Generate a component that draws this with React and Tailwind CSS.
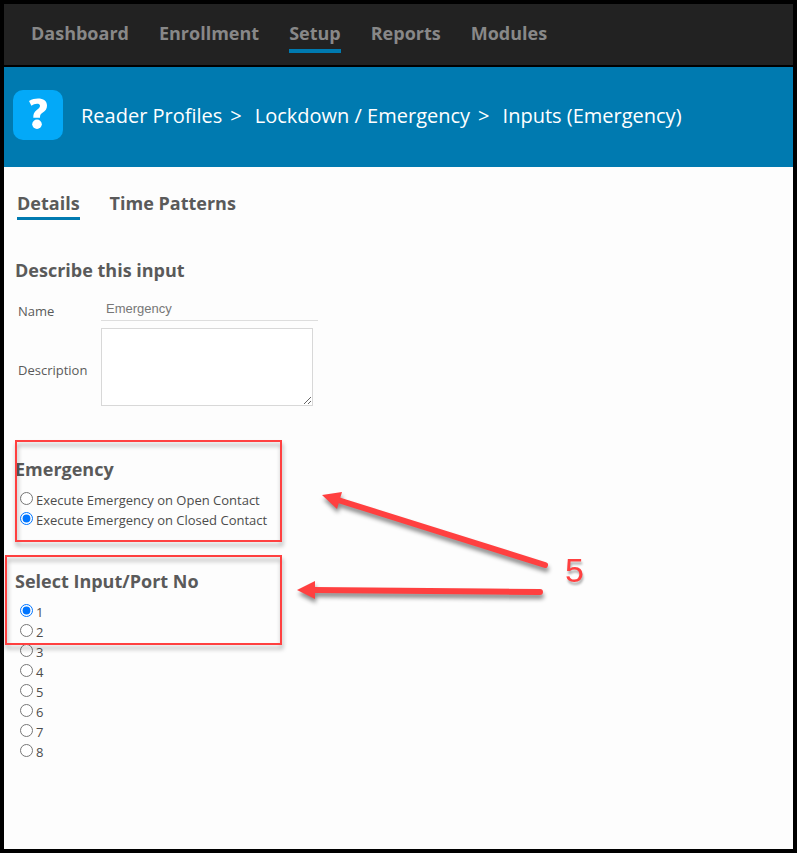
import { useState } from "react";

const navItems = ["Dashboard", "Enrollment", "Setup", "Reports", "Modules"];
const tabs = ["Details", "Time Patterns"];
const crumbs = ["Reader Profiles", "Lockdown / Emergency", "Inputs (Emergency)"];
const contacts = [
    { value: "open", label: "Execute Emergency on Open Contact" },
    { value: "closed", label: "Execute Emergency on Closed Contact" },
];
const ports = ["1", "2", "3", "4", "5", "6", "7", "8"];

function RadioList({ name, options, value, onChange }) {
    return (
        <div className="pl-[5px]">
            {options.map((option) => (
                <label
                    key={option.value}
                    className="flex items-start gap-[3px] h-5 text-[13px] leading-5 text-[#4c4c4c]"
                >
                    <input
                        type="radio"
                        name={name}
                        value={option.value}
                        checked={value === option.value}
                        onChange={() => onChange(option.value)}
                        className="w-[13px] h-[13px] mt-0.5"
                    />
                    {option.label}
                </label>
            ))}
        </div>
    );
}

function Annotations() {
    return (
        <div className="absolute inset-0 pointer-events-none">
            <div className="absolute left-[11px] top-[436px] w-[267px] h-[102px] border-2 border-[#ff4040] drop-shadow-[1px_4px_2px_rgba(0,0,0,0.35)]" />
            <div className="absolute left-px top-[551px] w-[277px] h-[90px] border-2 border-[#ff4040] drop-shadow-[1px_4px_2px_rgba(0,0,0,0.35)]" />
            <svg
                width="260"
                height="120"
                viewBox="294 486 260 120"
                className="absolute left-[290px] top-[482px] drop-shadow-[1px_4px_2px_rgba(0,0,0,0.45)]"
                fill="#ff4040"
                stroke="#ff4040"
                strokeLinecap="round"
            >
                <path d="M338 500 L545 565" strokeWidth="6" />
                <path d="M322 495 L342 492 L337 509 Z" stroke="none" />
                <path d="M313 590 L540 592" strokeWidth="6" />
                <path d="M297 590 L315 581 L315 599 Z" stroke="none" />
            </svg>
            <span className="absolute left-[561px] top-[548px] font-['Liberation_Sans',sans-serif] text-[34px] leading-9 text-[#ff4040] drop-shadow-[1px_3px_1px_rgba(0,0,0,0.3)]">
                5
            </span>
        </div>
    );
}

function App() {
    const [contact, setContact] = useState("closed");
    const [port, setPort] = useState("1");
    const [name, setName] = useState("Emergency");

    return (
        <div className="relative min-h-screen border-4 border-black bg-[#fdfdfd] font-['Open_Sans','Noto_Sans',sans-serif]">
            <nav className="flex gap-[30px] h-[63px] px-[27px] pt-[17px] bg-[#222222] border-b-2 border-black">
                {navItems.map((item) => (
                    <a
                        key={item}
                        href="#"
                        className={`h-8 text-lg leading-6 font-bold text-[#888888] ${
                            item === "Setup" ? "border-b-4 border-[#007ab0]" : ""
                        }`}
                    >
                        {item}
                    </a>
                ))}
            </nav>

            <header className="flex items-center h-[100px] pl-[9px] pb-1 bg-[#007ab0]">
                <div className="flex items-start justify-center w-[50px] h-[50px] pt-2 rounded-[10px] bg-[#03a9f8]">
                    <svg width="20" height="32" viewBox="0 0 20 32" fill="#ffffff">
                        <path d="M1 3 C4 1.2 7 .5 10 .5 C15.5 .5 19 3 19 7.5 C19 11 17.5 12.7 14.5 14.8 C12.4 16.3 12 17.2 12 19.8 H5.3 C5.2 16.2 6 14 9 11.8 C11 10.2 12 9.3 12 7.8 C12 6.3 10.8 5.7 9 5.7 C7 5.7 5 6.4 3.4 7.8 Z" />
                        <ellipse cx="9" cy="26.3" rx="4.8" ry="4.7" />
                    </svg>
                </div>
                <div className="flex pt-0.5 pl-[18px] text-xl text-white">
                    {crumbs.map((crumb, index) => (
                        <span key={crumb} className="flex">
                            <a href="#">{crumb}</a>
                            {index < crumbs.length - 1 && <span className="pl-2 pr-[13px]">&gt;</span>}
                        </span>
                    ))}
                </div>
            </header>

            <main className="px-[11px] pt-6 text-[#5a5a5a]">
                <div className="flex gap-[30px] pl-0.5">
                    {tabs.map((tab) => (
                        <a
                            key={tab}
                            href="#"
                            className={`h-[29px] text-lg leading-6 font-bold ${
                                tab === "Details" ? "border-b-[3px] border-[#007ab0]" : ""
                            }`}
                        >
                            {tab}
                        </a>
                    ))}
                </div>

                <h2 className="mt-[38px] text-lg leading-6 font-bold">Describe this input</h2>
                <div className="grid grid-cols-[83px_1fr] items-center gap-y-1.5 pt-[15px] pl-[3px] text-[13px]">
                    <label htmlFor="name" className="pt-[5px]">
                        Name
                    </label>
                    <input
                        id="name"
                        value={name}
                        onChange={(e) => setName(e.target.value)}
                        className="w-[217px] h-[23px] px-[5px] border-b border-[#dddddd] font-['Liberation_Sans',sans-serif] text-[13px] text-[#777777] outline-none"
                    />
                    <label htmlFor="description" className="pt-2">
                        Description
                    </label>
                    <textarea
                        id="description"
                        className="block w-[212px] h-[78px] border border-[#d8d8d8] bg-white outline-none"
                    />
                </div>

                <h2 className="mt-[51px] mb-[9px] text-lg leading-6 font-bold">Emergency</h2>
                <RadioList name="contact" options={contacts} value={contact} onChange={setContact} />

                <h2 className="mt-[39px] mb-[9px] text-lg leading-6 font-bold">Select Input/Port No</h2>
                <RadioList
                    name="port"
                    options={ports.map((p) => ({ value: p, label: p }))}
                    value={port}
                    onChange={setPort}
                />
            </main>

            <Annotations />
        </div>
    );
}

export default App;
